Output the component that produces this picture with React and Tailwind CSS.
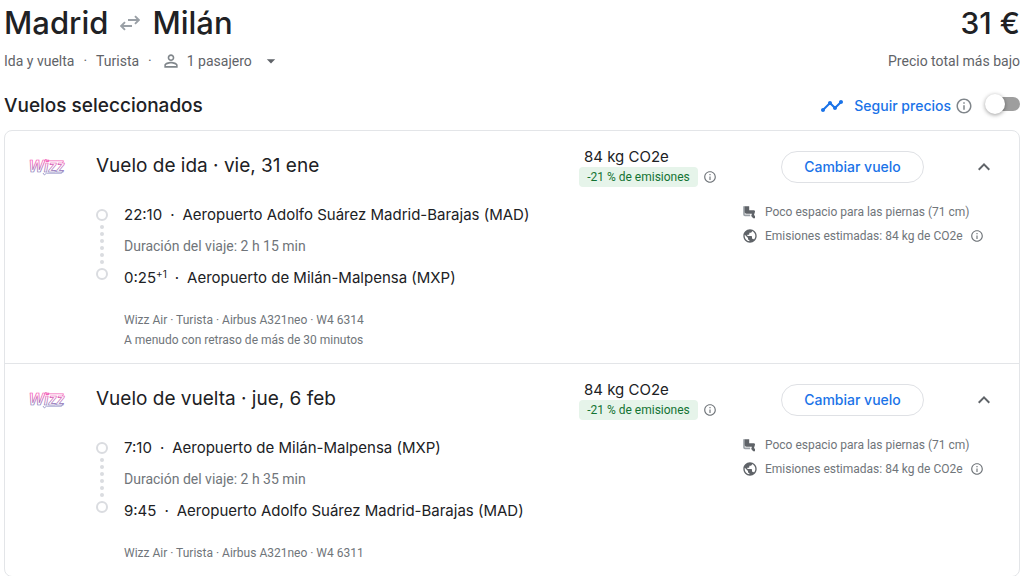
import React from 'react';
import { MdArrowDropDown, MdInfoOutline, MdKeyboardArrowUp, MdPersonOutline, MdPublic, MdTimeline } from 'react-icons/md';

const flights = [
    {
        id: 'ida',
        title: 'Vuelo de ida',
        date: 'vie, 31 ene',
        departure: { time: '22:10', airport: 'Aeropuerto Adolfo Suárez Madrid-Barajas (MAD)' },
        duration: '2 h 15 min',
        arrival: { time: '0:25', nextDay: '+1', airport: 'Aeropuerto de Milán-Malpensa (MXP)' },
        info: 'Wizz Air · Turista · Airbus A321neo · W4 6314',
        delay: 'A menudo con retraso de más de 30 minutos',
    },
    {
        id: 'vuelta',
        title: 'Vuelo de vuelta',
        date: 'jue, 6 feb',
        departure: { time: '7:10', airport: 'Aeropuerto de Milán-Malpensa (MXP)' },
        duration: '2 h 35 min',
        arrival: { time: '9:45', airport: 'Aeropuerto Adolfo Suárez Madrid-Barajas (MAD)' },
        info: 'Wizz Air · Turista · Airbus A321neo · W4 6311',
    },
];

const RoundTripIcon = () => (
    <svg className="w-5 h-4 text-[#9aa0a6]" viewBox="0 0 20 16" fill="none" stroke="currentColor" strokeWidth="1.9">
        <path d="M8 5h10.5M15 1.2 18.8 5 15 8.8" />
        <path d="M12 11H1.5M5 7.2 1.2 11 5 14.8" />
    </svg>
);

const LegroomIcon = () => (
    <svg className="w-4 h-4" viewBox="0 0 16 16">
        <path d="M1.2 2.2h1.6v8.4h5.4v1.6H3a1.8 1.8 0 0 1-1.8-1.8z" fill="#9aa0a6" />
        <path
            d="M2.6 2.2h4.6v4h4.6a1.2 1.2 0 0 1 1.2 1.5l-1 3.4 1 1v2.2h-1.8l-2-2.2.7-2.4H4.4a1.8 1.8 0 0 1-1.8-1.8z"
            fill="#5f6368"
        />
    </svg>
);

const WizzLogo = ({ id }) => (
    <svg className="w-10 h-6" viewBox="0 0 40 24" role="img" aria-label="Wizz Air">
        <defs>
            <linearGradient id={`wizz-${id}`} x1="0" y1="4" x2="0" y2="20" gradientUnits="userSpaceOnUse">
                <stop offset="0.2" stopColor="#f04fae" />
                <stop offset="0.85" stopColor="#7a78b8" />
            </linearGradient>
        </defs>
        <g fill="none" stroke={`url(#wizz-${id})`} strokeWidth="0.7">
            <text x="0" y="17" fontSize="16" fontWeight="700" fontStyle="italic" fontFamily="'Liberation Sans', sans-serif">
                Wizz
            </text>
            <path d="M15.5 5.6 17 4.2l1.5 1.6H34.5l-1 2.2M14 18l1.4 2 2-1.8h15.2l1-2" />
        </g>
    </svg>
);

const Timeline = () => (
    <div className="flex flex-col items-center w-3 pt-[6px]">
        <div className="w-3 h-3 rounded-full border-2 border-[#dadce0]" />
        <div className="flex flex-col gap-[3px] py-1">
            {[0, 1, 2, 3, 4, 5].map((dot) => (
                <div key={dot} className="w-1 h-1 rounded-full bg-[#dadce0]" />
            ))}
        </div>
        <div className="w-3 h-3 rounded-full border-2 border-[#dadce0]" />
    </div>
);

const Stop = ({ stop }) => (
    <p className="text-[15px] leading-6 font-[Inter,sans-serif]">
        {stop.time}
        {stop.nextDay && <span className="text-[10px] leading-4 align-top">{stop.nextDay}</span>}
        <span className="mx-2">·</span>
        {stop.airport}
    </p>
);

const FlightSection = ({ flight }) => (
    <section className="pt-[15px] pb-[13px] pl-6 border-b border-[#e3e5e8] last:border-b-0">
        <div className="flex items-center">
            <div className="w-[67px]">
                <WizzLogo id={flight.id} />
            </div>
            <h3 className="flex-1 text-[19px] font-[Inter,sans-serif]">
                {flight.title} · {flight.date}
            </h3>
            <div className="w-[202px]">
                <p className="pl-[5px] text-[15px] leading-[21px] font-[Inter,sans-serif]">84 kg CO2e</p>
                <div className="flex items-center gap-[5px]">
                    <span className="w-[119px] rounded bg-[#e6f4ea] text-[#137333] text-xs leading-5 text-center">
                        -21 % de emisiones
                    </span>
                    <MdInfoOutline className="w-[14px] h-[14px] text-[#70757a]" />
                </div>
            </div>
            <button className="w-[143px] h-8 rounded-full border border-[#dfe1e5] text-[#1a73e8] text-sm font-medium font-[Inter,sans-serif]">
                Cambiar vuelo
            </button>
            <button className="flex justify-center w-[95px] pl-6 text-[#5f6368]" aria-label="Contraer">
                <MdKeyboardArrowUp className="w-6 h-6" />
            </button>
        </div>
        <div className="flex mt-[13px] pl-[67px]">
            <div className="flex flex-1 gap-4 pt-[3px]">
                <Timeline />
                <div>
                    <Stop stop={flight.departure} />
                    <p className="my-[9px] text-sm leading-[21px] text-[#70757a]">Duración del viaje: {flight.duration}</p>
                    <Stop stop={flight.arrival} />
                    <p className="mt-5 text-xs leading-5 text-[#70757a]">{flight.info}</p>
                    {flight.delay && <p className="text-xs leading-5 text-[#70757a]">{flight.delay}</p>}
                </div>
            </div>
            <ul className="w-[277px] text-xs leading-6 text-[#70757a]">
                <li className="flex items-center gap-[7px]">
                    <LegroomIcon />
                    Poco espacio para las piernas (71 cm)
                </li>
                <li className="flex items-center gap-[7px]">
                    <MdPublic className="w-4 h-4 text-[#5f6368]" />
                    Emisiones estimadas: 84 kg de CO2e
                    <MdInfoOutline className="w-[14px] h-[14px]" />
                </li>
            </ul>
        </div>
    </section>
);

export default function App() {
    return (
        <main className="px-1 bg-white text-[#202124] font-[Roboto,sans-serif]">
            <header className="flex justify-between">
                <div>
                    <h1 className="flex items-center gap-3 h-[46px] text-[31px] font-medium font-[Inter,sans-serif]">
                        Madrid
                        <RoundTripIcon />
                        Milán
                    </h1>
                    <div className="flex items-center h-[30px] text-sm text-[#5f6368]">
                        Ida y vuelta
                        <span className="mx-[9px]">·</span>
                        Turista
                        <span className="mx-[9px]">·</span>
                        <label className="flex items-center">
                            <MdPersonOutline className="w-5 h-5 mr-[6px] text-[#80868b]" />
                            <select className="w-[74px] appearance-none bg-transparent" aria-label="Pasajeros">
                                <option>1 pasajero</option>
                                <option>2 pasajeros</option>
                            </select>
                            <MdArrowDropDown className="w-5 h-5" />
                        </label>
                    </div>
                </div>
                <div className="text-right">
                    <p className="h-[46px] text-3xl leading-[46px] font-medium font-[Inter,sans-serif]">31 €</p>
                    <p className="text-sm leading-[30px] text-[#5f6368]">Precio total más bajo</p>
                </div>
            </header>

            <div className="flex items-center justify-between h-[54px] pt-[6px]">
                <h2 className="text-[19px] font-medium font-[Inter,sans-serif]">Vuelos seleccionados</h2>
                <div className="flex items-center">
                    <label htmlFor="track" className="flex items-center gap-[10px] text-sm font-medium text-[#1a73e8] font-[Inter,sans-serif]">
                        <MdTimeline className="w-6 h-6" />
                        Seguir precios
                    </label>
                    <MdInfoOutline className="w-[18px] h-[18px] ml-1 text-[#80868b]" />
                    <input
                        id="track"
                        type="checkbox"
                        role="switch"
                        className="flex items-center appearance-none w-8 h-[14px] ml-[15px] mb-1 rounded-full bg-[#9e9e9e] before:w-5 before:h-5 before:-ml-[3px] before:shrink-0 before:rounded-full before:bg-white before:shadow-[0_1px_4px_rgba(0,0,0,0.4)]"
                    />
                </div>
            </div>

            <div className="border border-[#e3e5e8] rounded-lg">
                {flights.map((flight) => (
                    <FlightSection key={flight.id} flight={flight} />
                ))}
            </div>
        </main>
    );
}
